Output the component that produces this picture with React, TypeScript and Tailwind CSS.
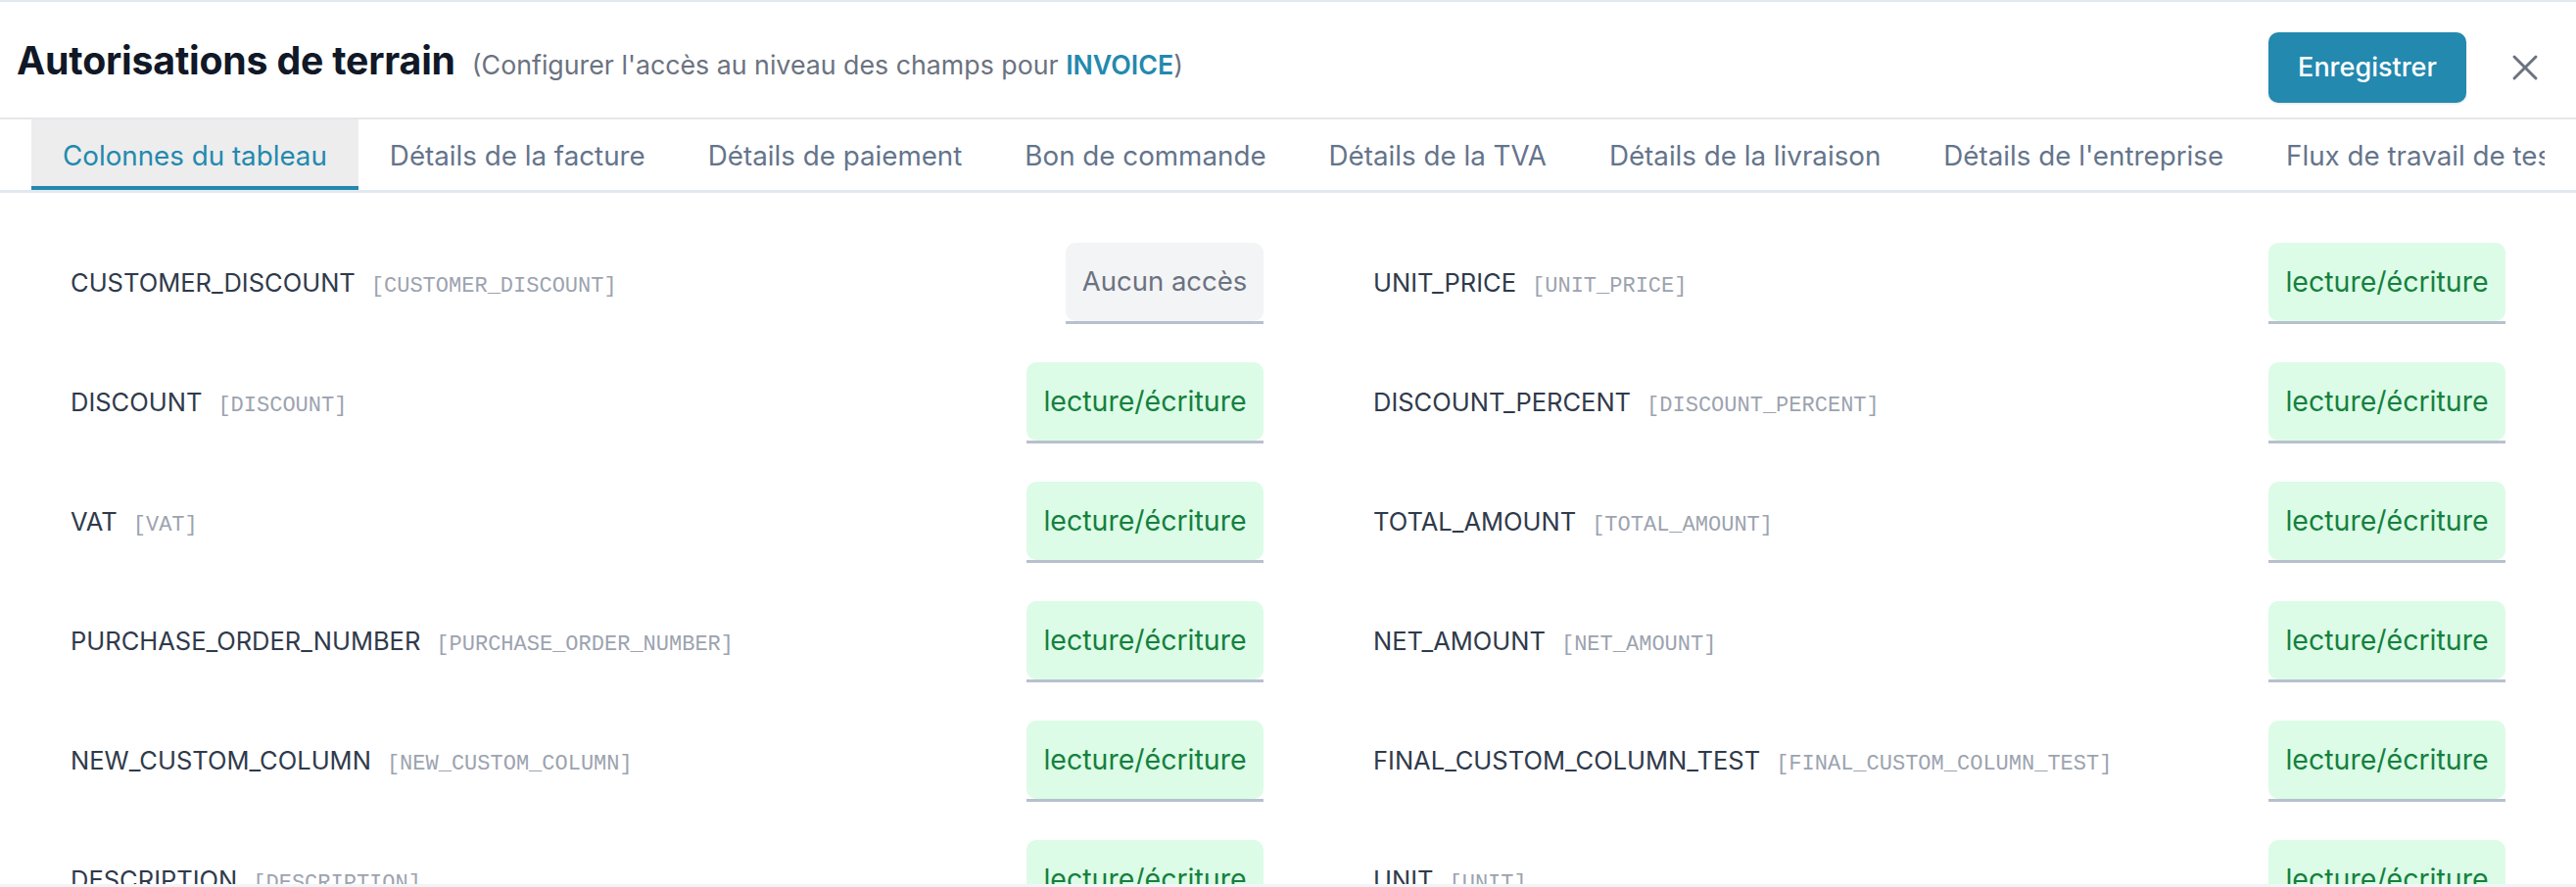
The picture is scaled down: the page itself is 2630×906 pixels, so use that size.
import { X } from "lucide-react";

type Access = "none" | "rw";

const tabs = [
  "Colonnes du tableau",
  "Détails de la facture",
  "Détails de paiement",
  "Bon de commande",
  "Détails de la TVA",
  "Détails de la livraison",
  "Détails de l'entreprise",
  "Flux de travail de test",
];

const fields: { name: string; access: Access }[] = [
  { name: "CUSTOMER_DISCOUNT", access: "none" },
  { name: "UNIT_PRICE", access: "rw" },
  { name: "DISCOUNT", access: "rw" },
  { name: "DISCOUNT_PERCENT", access: "rw" },
  { name: "VAT", access: "rw" },
  { name: "TOTAL_AMOUNT", access: "rw" },
  { name: "PURCHASE_ORDER_NUMBER", access: "rw" },
  { name: "NET_AMOUNT", access: "rw" },
  { name: "NEW_CUSTOM_COLUMN", access: "rw" },
  { name: "FINAL_CUSTOM_COLUMN_TEST", access: "rw" },
  { name: "DESCRIPTION", access: "rw" },
  { name: "UNIT", access: "rw" },
];

const AccessBadge = ({ access }: { access: Access }) => {
  return (
    <div className="border-b-[3px] border-[#b8c0ce]">
      {access === "none" ? (
        <div className="w-[202px] h-[80px] px-[16px] flex items-center justify-center rounded-[10px] bg-[#f3f4f6] text-[#6b7280] text-[27.5px]">
          Aucun accès
        </div>
      ) : (
        <div className="w-[242px] h-[80px] flex items-center justify-center rounded-[10px] bg-[#dcfce7] text-[#15803d] text-[28.5px]">
          lecture/écriture
        </div>
      )}
    </div>
  );
};

const FieldRow = ({ name, access }: { name: string; access: Access }) => {
  return (
    <div className="flex items-center justify-between">
      <div className="flex items-baseline gap-[16px]">
        <span className="text-[25.5px] text-[#2f3a4b]">{name}</span>
        <span className="text-[22px] text-[#9ca3af] font-['Liberation_Mono',monospace]">
          [{name}]
        </span>
      </div>
      <AccessBadge access={access} />
    </div>
  );
};

export default function App() {
  return (
    <div className="w-[2630px] h-[906px] overflow-hidden bg-white flex flex-col font-['Inter',sans-serif] border-t-2 border-[#e2e8f0]">
      {/* header */}
      <div className="h-[120px] shrink-0 flex items-center justify-between pl-[17px] pr-[30px] border-b-2 border-[#e5e7eb]">
        <div className="flex items-baseline gap-[17px] pt-[2px]">
          <h1 className="text-[39.25px] font-bold text-[#111827] tracking-[-0.2px]">
            Autorisations de terrain
          </h1>
          <p className="text-[26.75px] text-[#6b7280]">
            (Configurer l'accès au niveau des champs pour{" "}
            <span className="font-semibold text-[#2389ae]">INVOICE</span>)
          </p>
        </div>
        <div className="flex items-center gap-[38px] pt-[16px]">
          <button className="w-[202px] h-[72px] rounded-[10px] bg-[#2389ae] text-white text-[27px] font-medium shadow-sm">
            Enregistrer
          </button>
          <X size={44} strokeWidth={1.6} className="text-[#6b7280]" />
        </div>
      </div>

      {/* tabs */}
      <div className="shrink-0 border-b-[3px] border-[#e2e8f0] px-[32px]">
        <div className="flex overflow-hidden">
          {tabs.map((tab, i) => (
            <div
              key={tab}
              className={
                i === 0
                  ? "h-[72px] px-[32px] pt-[8px] shrink-0 flex items-center border-b-4 border-[#2389ae] bg-[#ededed] text-[#2389ae] text-[27.75px]"
                  : "h-[72px] px-[32px] pt-[8px] shrink-0 flex items-center border-b-4 border-transparent text-[#64748b] text-[27.75px]"
              }
            >
              {tab}
            </div>
          ))}
        </div>
      </div>

      {/* fields */}
      <div className="flex-1 overflow-hidden px-[72px] pt-[51px]">
        <div className="grid grid-cols-[1218px_1156px] gap-x-[112px] gap-y-[39px]">
          {fields.map((f) => (
            <FieldRow key={f.name} name={f.name} access={f.access} />
          ))}
        </div>
      </div>
      <div className="h-[3px] shrink-0 bg-[#f3f4f6]" />
    </div>
  );
}
